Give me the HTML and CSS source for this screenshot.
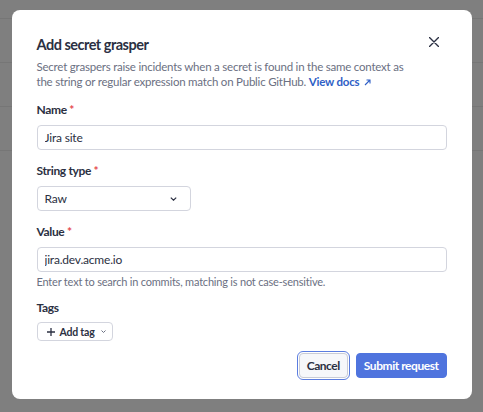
FILE: index.html
```html
<!DOCTYPE html>
<html lang="en">

<head>
    <meta charset="UTF-8" />
    <meta name="viewport" content="width=device-width, initial-scale=1.0" />
    <title>Add secret grasper</title>
    <link rel="stylesheet" href="styles.css">
</head>

<body>
    <div class="page">
        <div class="page-row short"></div>
        <div class="page-row"></div>
        <div class="page-row"></div>
        <div class="page-row"></div>
    </div>

    <div class="overlay">
        <div class="modal">
            <button class="close-btn" aria-label="Close">
                <svg width="10" height="10" viewBox="0 0 10 10">
                    <path d="M0.5 0.5 L9.5 9.5 M9.5 0.5 L0.5 9.5" stroke="#2b3042" stroke-width="1.4" stroke-linecap="round" />
                </svg>
            </button>

            <h2 class="modal-title">Add secret grasper</h2>
            <p class="modal-desc">
                Secret graspers raise incidents when a secret is found in the same context as
                the string or regular expression match on Public GitHub.
                <a href="#" class="docs-link">View docs&nbsp;<svg width="7" height="7" viewBox="0 0 7 7"><path d="M1 6 L6 1 M2.5 1 H6 V4.5" fill="none" stroke="#2f5fc6" stroke-width="1.1" /></svg></a>
            </p>

            <div class="field">
                <label class="label">Name <span class="req">*</span></label>
                <input class="input" type="text" value="Jira site" />
            </div>

            <div class="field">
                <label class="label">String type <span class="req">*</span></label>
                <div class="select">
                    <span>Raw</span>
                    <svg width="7" height="4" viewBox="0 0 7 4">
                        <path d="M0.8 0.6 L3.5 3.2 L6.2 0.6" fill="none" stroke="#2b3042" stroke-width="1.2" />
                    </svg>
                </div>
            </div>

            <div class="field">
                <label class="label">Value <span class="req">*</span></label>
                <input class="input" type="text" value="jira.dev.acme.io" />
                <div class="hint">Enter text to search in commits, matching is not case-sensitive.</div>
            </div>

            <div class="field tags">
                <label class="label">Tags</label>
                <div class="tag-row">
                    <button class="tag-btn">
                        <svg width="8" height="8" viewBox="0 0 8 8">
                            <path d="M4 0 V8 M0 4 H8" stroke="#2b3042" stroke-width="1.3" />
                        </svg>
                        <span>Add tag</span>
                        <svg width="5" height="3" viewBox="0 0 5 3">
                            <path d="M0.5 0.5 L2.5 2.5 L4.5 0.5" fill="none" stroke="#6b7082" stroke-width="1" />
                        </svg>
                    </button>
                </div>
            </div>

            <div class="actions">
                <button class="btn btn-cancel">Cancel</button>
                <button class="btn btn-primary">Submit request</button>
            </div>
        </div>
    </div>
</body>

</html>
```

FILE: styles.css
```css
* {
    box-sizing: border-box;
}

body {
    margin: 0;
    font-family: 'Lato', 'Noto Sans', sans-serif;
    background: #ffffff;
    height: 100vh;
    overflow: hidden;
}

.page-row {
    height: 44px;
    border-bottom: 1px solid #ececec;
}

.page-row.short {
    height: 19px;
}

.overlay {
    position: fixed;
    inset: 0;
    background: rgba(0, 0, 0, 0.5);
    display: flex;
    justify-content: center;
    padding-top: 10px;
}

.modal {
    position: relative;
    width: 460px;
    height: 389px;
    background: #ffffff;
    border-radius: 8px;
    padding: 25px 25px 0 25px;
    color: #2b3042;
}

.close-btn {
    position: absolute;
    top: 22px;
    left: 412px;
    width: 20px;
    height: 20px;
    border: none;
    background: none;
    padding: 0;
    display: flex;
    align-items: center;
    justify-content: center;
    cursor: pointer;
}

.modal-title {
    margin: 0;
    font-size: 14.5px;
    line-height: 20px;
    font-weight: 700;
    letter-spacing: -0.5px;
}

.modal-desc {
    margin: 4px 0 0 0;
    font-size: 11.5px;
    line-height: 15px;
    letter-spacing: -0.22px;
    color: #6b7082;
    width: 380px;
}

.docs-link {
    color: #2f5fc6;
    font-weight: 700;
    text-decoration: none;
    white-space: nowrap;
}

.docs-link svg {
    margin-left: 2px;
}

.field {
    margin-top: 13px;
}

.field.tags {
    margin-top: 11px;
}

.label {
    display: block;
    font-size: 12px;
    line-height: 16px;
    font-weight: 700;
    letter-spacing: -0.35px;
    margin-bottom: 7px;
}

.req {
    color: #e5484d;
}

.input {
    display: block;
    width: 100%;
    height: 25px;
    border: 1px solid #d3d5de;
    border-radius: 4px;
    padding: 0 7px;
    font-family: inherit;
    font-size: 12px;
    letter-spacing: -0.2px;
    color: #2b3042;
    outline: none;
}

.select {
    width: 154px;
    height: 25px;
    border: 1px solid #d3d5de;
    border-radius: 4px;
    padding: 0 13px 0 7px;
    font-size: 12px;
    letter-spacing: -0.2px;
    display: flex;
    align-items: center;
    justify-content: space-between;
}

.hint {
    margin-top: 3px;
    font-size: 11px;
    line-height: 14px;
    letter-spacing: -0.2px;
    color: #6b7082;
}

.tag-row {
    display: flex;
    margin-top: -1px;
}

.tag-btn {
    display: flex;
    align-items: center;
    gap: 5px;
    height: 19px;
    padding: 0 6px 0 9px;
    border: 1px solid #d3d5de;
    border-radius: 4px;
    background: #ffffff;
    font-family: inherit;
    font-size: 10.5px;
    font-weight: 700;
    letter-spacing: -0.2px;
    white-space: nowrap;
    color: #2b3042;
}

.tag-btn span {
    margin-right: 1px;
}

.actions {
    display: flex;
    justify-content: flex-end;
    gap: 8px;
    margin-top: 12px;
}

.btn {
    height: 25px;
    padding: 0 7px;
    border-radius: 4px;
    font-family: inherit;
    font-size: 12px;
    font-weight: 700;
    letter-spacing: -0.45px;
    cursor: pointer;
}

.btn-cancel {
    background: #f6f7fa;
    color: #2b3042;
    border: 1px solid #c9ccd6;
    outline: 1px solid #5b7de0;
    outline-offset: 1px;
}

.btn-primary {
    background: #4f74de;
    color: #ffffff;
    border: 1px solid #4f74de;
}
```
